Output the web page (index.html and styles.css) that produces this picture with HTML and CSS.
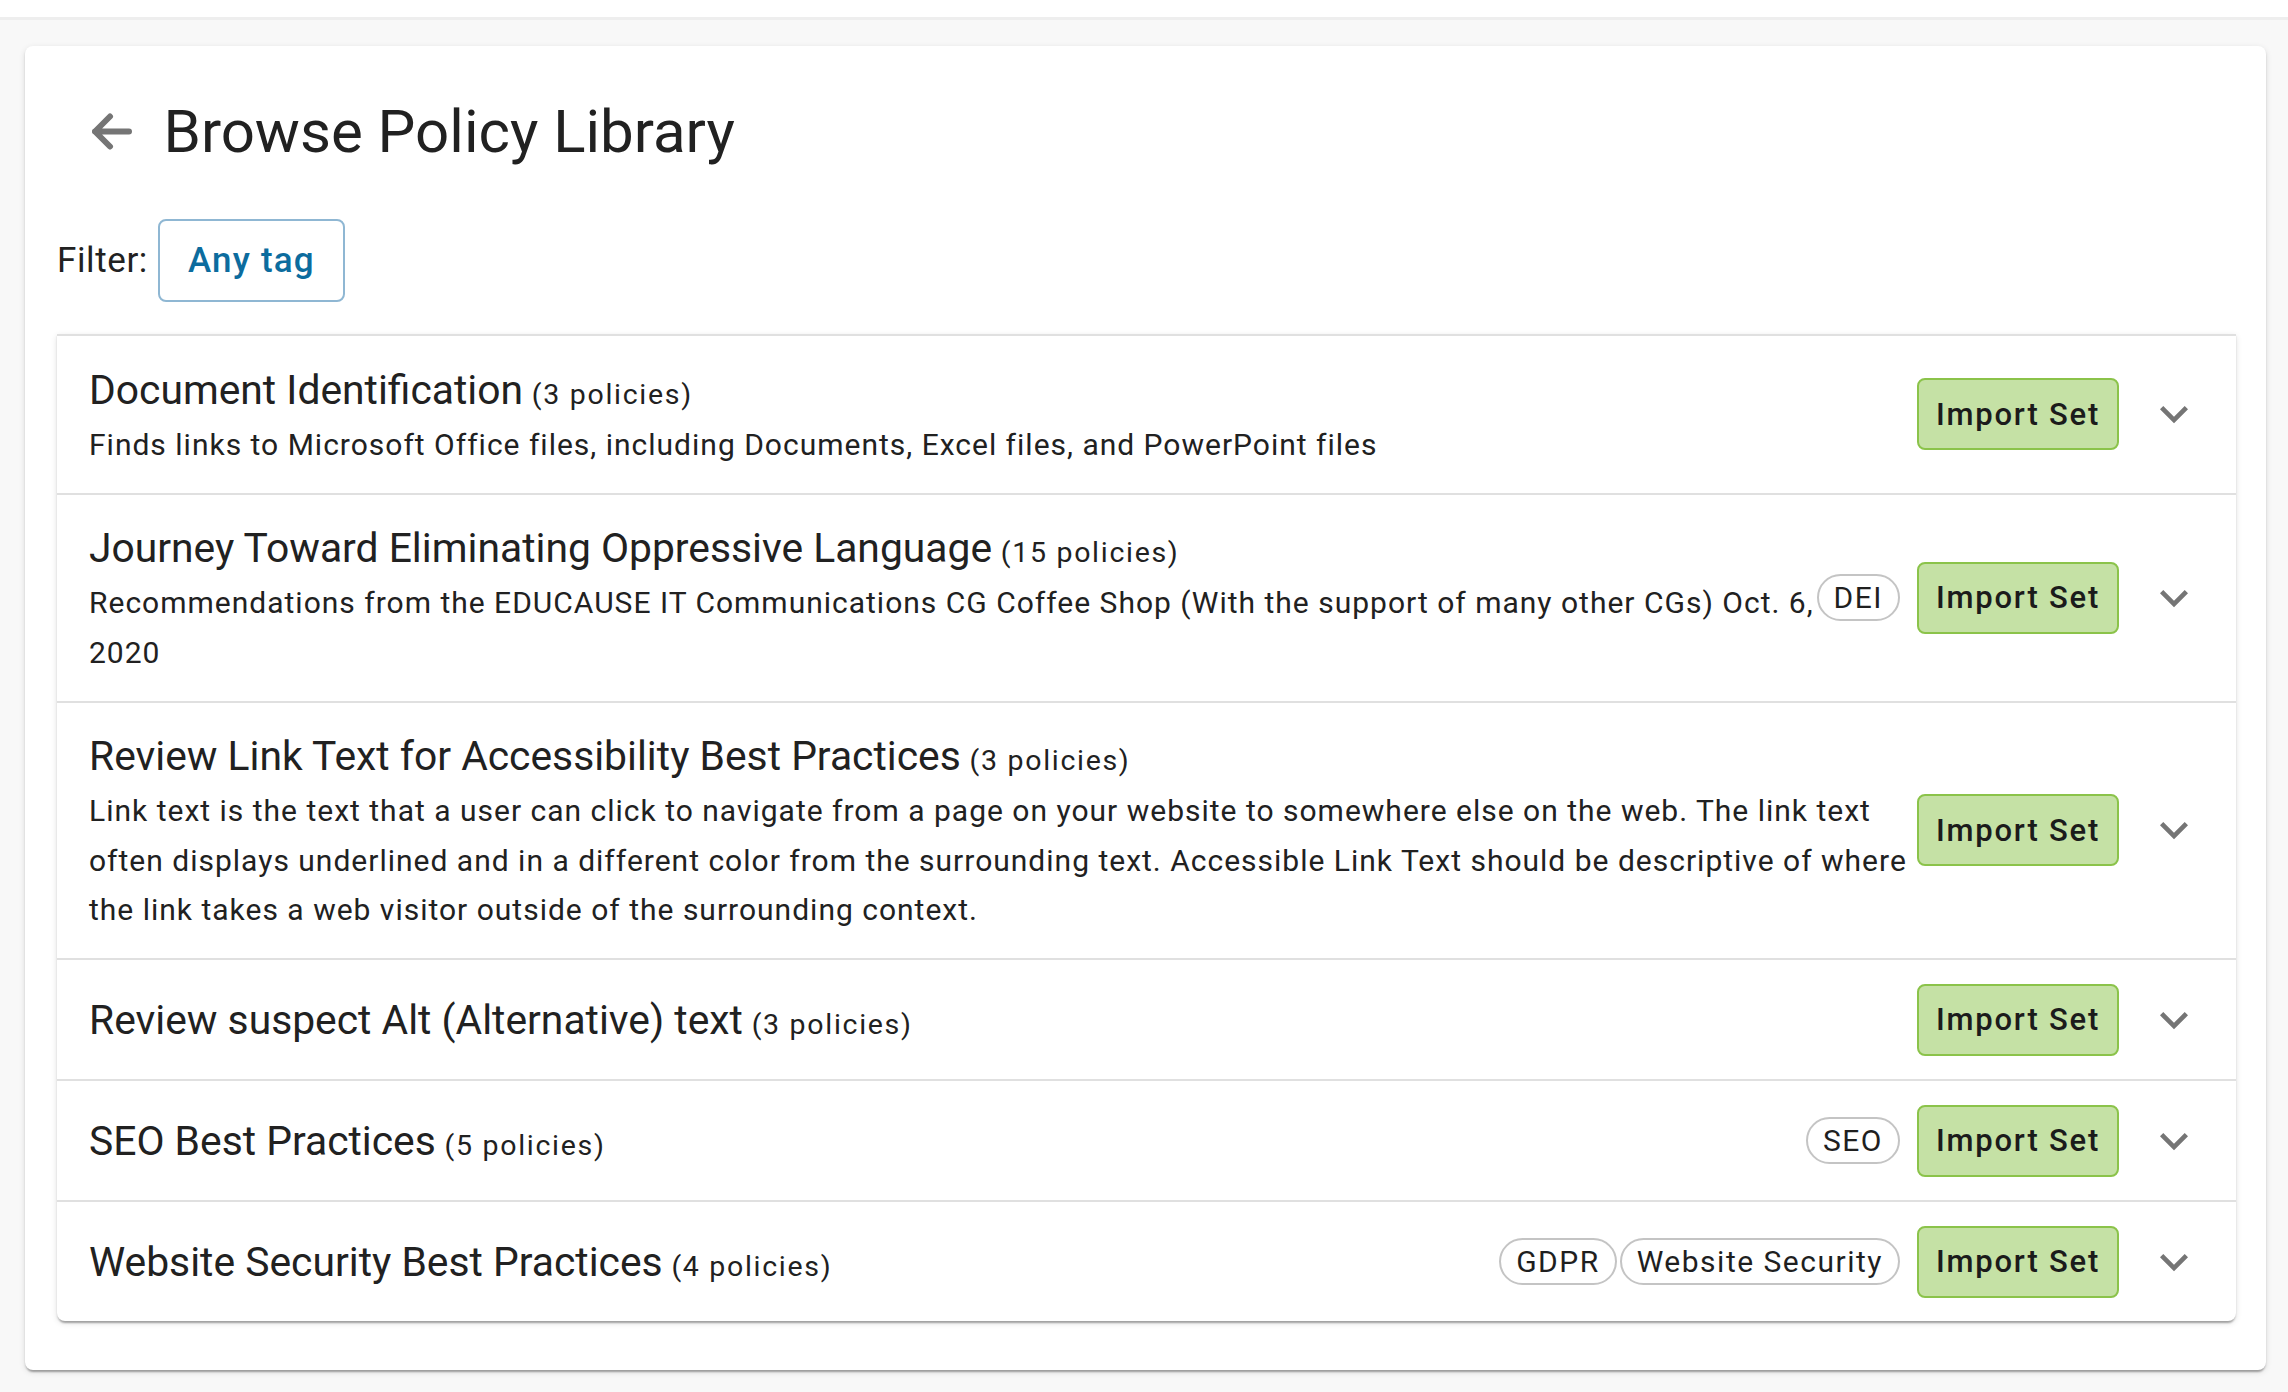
FILE: index.html
```html
<!DOCTYPE html>
<html lang="en">
<head>
<meta charset="utf-8">
<title>Browse Policy Library</title>
<link rel="stylesheet" href="styles.css">
</head>
<body>
<div class="topbar"></div>
<main class="page">
  <section class="card">
    <header class="head">
      <button class="back" aria-label="Back">
        <svg width="40" height="39" viewBox="0 0 40 39"><path d="M37 19.5H3M18 4.5L3 19.5L18 34.5" fill="none" stroke="#757575" stroke-width="6" stroke-linecap="round" stroke-linejoin="round"/></svg>
      </button>
      <h1 class="title">Browse Policy Library</h1>
    </header>

    <div class="filter">
      <span class="filter-label">Filter:</span>
      <button class="tagbtn">Any tag</button>
    </div>

    <div class="list">
      <div class="row">
        <div class="info">
          <div class="name">Document Identification<span class="count"> (3 policies)</span></div>
          <div class="desc">Finds links to Microsoft Office files, including Documents, Excel files, and PowerPoint files</div>
        </div>
        <button class="import">Import Set</button>
        <span class="expand"><svg width="56" height="56" viewBox="0 0 24 24"><path d="M16.59 8.59 12 13.17 7.41 8.59 6 10l6 6 6-6z" fill="#757575"/></svg></span>
      </div>

      <div class="row">
        <div class="info info-tagged">
          <div class="name">Journey Toward Eliminating Oppressive Language<span class="count"> (15 policies)</span></div>
          <div class="desc">Recommendations from the EDUCAUSE IT Communications CG Coffee Shop (With the support of many other CGs) Oct. 6, 2020</div>
        </div>
        <div class="tags"><span class="chip">DEI</span></div>
        <button class="import">Import Set</button>
        <span class="expand"><svg width="56" height="56" viewBox="0 0 24 24"><path d="M16.59 8.59 12 13.17 7.41 8.59 6 10l6 6 6-6z" fill="#757575"/></svg></span>
      </div>

      <div class="row">
        <div class="info">
          <div class="name">Review Link Text for Accessibility Best Practices<span class="count"> (3 policies)</span></div>
          <div class="desc">Link text is the text that a user can click to navigate from a page on your website to somewhere else on the web. The link text often displays underlined and in a different color from the surrounding text. Accessible Link Text should be descriptive of where the link takes a web visitor outside of the surrounding context.</div>
        </div>
        <button class="import">Import Set</button>
        <span class="expand"><svg width="56" height="56" viewBox="0 0 24 24"><path d="M16.59 8.59 12 13.17 7.41 8.59 6 10l6 6 6-6z" fill="#757575"/></svg></span>
      </div>

      <div class="row">
        <div class="info">
          <div class="name">Review suspect Alt (Alternative) text<span class="count"> (3 policies)</span></div>
        </div>
        <button class="import">Import Set</button>
        <span class="expand"><svg width="56" height="56" viewBox="0 0 24 24"><path d="M16.59 8.59 12 13.17 7.41 8.59 6 10l6 6 6-6z" fill="#757575"/></svg></span>
      </div>

      <div class="row">
        <div class="info info-tagged">
          <div class="name">SEO Best Practices<span class="count"> (5 policies)</span></div>
        </div>
        <div class="tags"><span class="chip">SEO</span></div>
        <button class="import">Import Set</button>
        <span class="expand"><svg width="56" height="56" viewBox="0 0 24 24"><path d="M16.59 8.59 12 13.17 7.41 8.59 6 10l6 6 6-6z" fill="#757575"/></svg></span>
      </div>

      <div class="row">
        <div class="info info-tagged">
          <div class="name">Website Security Best Practices<span class="count"> (4 policies)</span></div>
        </div>
        <div class="tags"><span class="chip">GDPR</span><span class="chip">Website Security</span></div>
        <button class="import">Import Set</button>
        <span class="expand"><svg width="56" height="56" viewBox="0 0 24 24"><path d="M16.59 8.59 12 13.17 7.41 8.59 6 10l6 6 6-6z" fill="#757575"/></svg></span>
      </div>
    </div>
  </section>
</main>
</body>
</html>
```

FILE: styles.css
```css
* { box-sizing: border-box; }

html, body {
  margin: 0;
  background: #f8f8f8;
  font-family: Roboto, "Liberation Sans", Arial, sans-serif;
  color: #212121;
}

.topbar {
  height: 20px;
  background: #ffffff;
  border-bottom: 3px solid #eeeeee;
}

.page {
  padding: 26px 22px 23px 25px;
}

.card {
  background: #ffffff;
  border-radius: 8px;
  box-shadow: 0 4px 2px -2px rgba(0,0,0,0.2), 0 2px 2px 0 rgba(0,0,0,0.14), 0 2px 6px 0 rgba(0,0,0,0.12);
  padding: 51px 30px 49px 32px;
}

.head {
  display: flex;
  align-items: center;
  height: 69px;
  padding-left: 34.5px;
  gap: 32px;
}

.back {
  display: flex;
  align-items: center;
  justify-content: center;
  padding: 0;
  margin: 0;
  border: 0;
  background: transparent;
  width: 40px;
  height: 39px;
}

.title {
  margin: 0;
  font-size: 60px;
  font-weight: 400;
  line-height: 69px;
  color: #212121;
}

.filter {
  display: flex;
  align-items: center;
  gap: 10px;
  margin-top: 53px;
}

.filter-label {
  font-size: 35px;
  letter-spacing: 0.6px;
  line-height: 40px;
}

.tagbtn {
  height: 83px;
  width: 187px;
  border: 2px solid #8fb7d3;
  border-radius: 8px;
  background: #ffffff;
  color: #0c6c9e;
  font-family: Roboto, "Liberation Sans", Arial, sans-serif;
  font-size: 35px;
  font-weight: 500;
  letter-spacing: 1.2px;
  padding: 0;
}

.list {
  margin-top: 32px;
  background: #ffffff;
  border-radius: 0 0 8px 8px;
  box-shadow: 0 4px 2px -2px rgba(0,0,0,0.2), 0 2px 2px 0 rgba(0,0,0,0.14), 0 2px 6px 0 rgba(0,0,0,0.12);
}

.row {
  display: flex;
  align-items: center;
  border-top: 2px solid #e0e0e0;
  padding: 23.5px 34px 23.5px 32px;
}

.info {
  flex: 1;
  min-width: 0;
  margin-right: 6px;
}

.info-tagged {
  margin-right: 0;
}

.tags {
  display: flex;
  gap: 3px;
  margin-right: 17px;
}

.name {
  font-size: 40.8px;
  line-height: 60px;
  color: #212121;
}

.count {
  font-size: 28.5px;
  line-height: 1;
  letter-spacing: 1.7px;
}

.desc {
  font-size: 30px;
  line-height: 49.5px;
  letter-spacing: 1px;
  color: #212121;
}

.chip {
  display: flex;
  align-items: center;
  height: 47px;
  padding: 0 15px;
  border: 2px solid #c4c4c4;
  border-radius: 24px;
  font-size: 30px;
  letter-spacing: 1.5px;
  white-space: nowrap;
  color: #1f1f1f;
}

.import {
  flex: none;
  width: 202px;
  height: 72px;
  padding: 0;
  border: 2px solid #8bc34a;
  border-radius: 8px;
  background: #c5e1a5;
  color: #1b1b1b;
  font-family: Roboto, "Liberation Sans", Arial, sans-serif;
  font-size: 31px;
  font-weight: 500;
  letter-spacing: 1.8px;
}

.expand {
  flex: none;
  display: flex;
  width: 56px;
  height: 56px;
  margin-left: 27px;
}
```
